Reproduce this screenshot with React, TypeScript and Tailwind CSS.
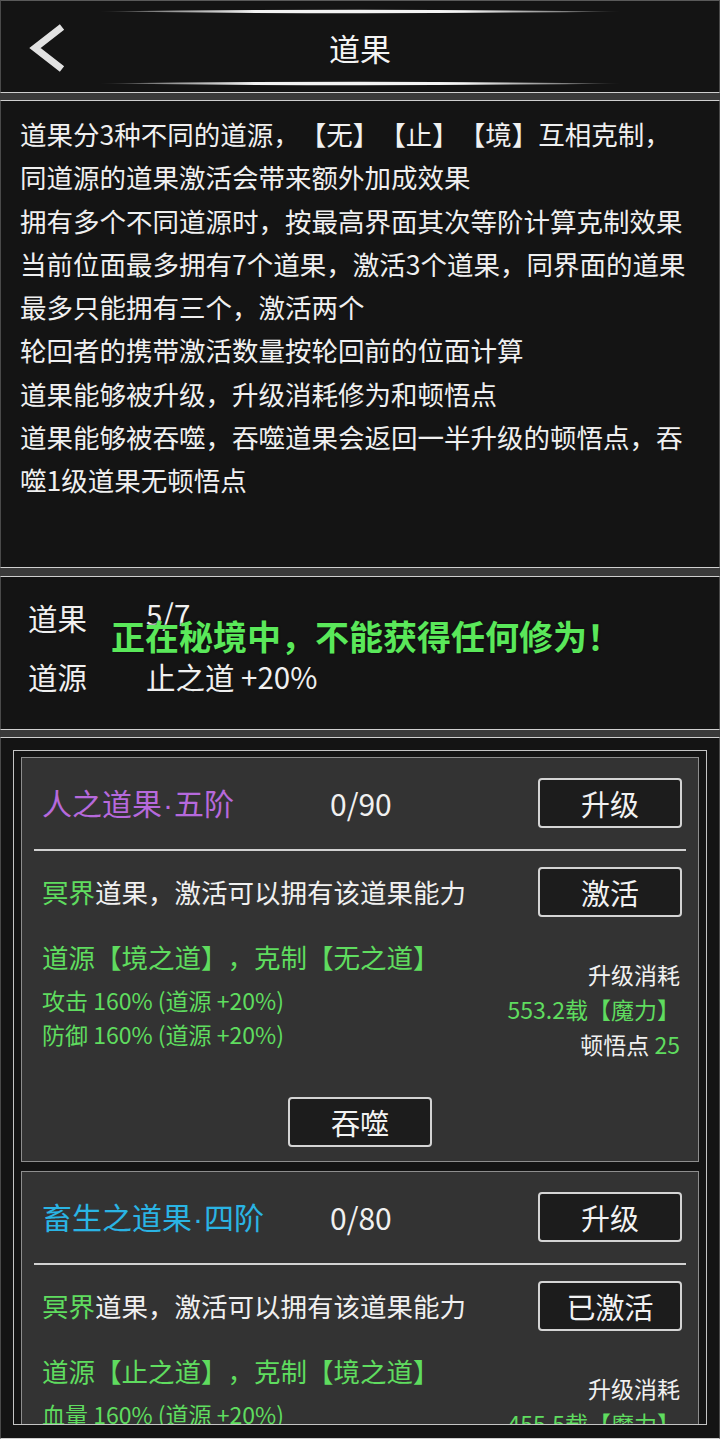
import React from "react";

function Btn({ children, className = "" }: { children: React.ReactNode; className?: string }) {
  return (
    <div
      className={`w-[144px] h-[50px] flex items-center justify-center bg-[#1c1c1c] border-2 border-[#d4d4d4] rounded-[4px] text-[29px] leading-none text-[#f2f2f2] ${className}`}
    >
      {children}
    </div>
  );
}

function GlowLine() {
  return (
    <svg width="520" height="5" viewBox="0 0 520 5" className="block">
      <defs>
        <linearGradient id="gl" x1="0" y1="0" x2="1" y2="0">
          <stop offset="0" stopColor="#2a2a2a" />
          <stop offset="0.12" stopColor="#8a8a8a" />
          <stop offset="0.3" stopColor="#f4f4f4" />
          <stop offset="0.7" stopColor="#f4f4f4" />
          <stop offset="0.88" stopColor="#8a8a8a" />
          <stop offset="1" stopColor="#2a2a2a" />
        </linearGradient>
      </defs>
      <path d="M0,2.5 Q260,-0.8 520,2.5 Q260,5.8 0,2.5 Z" fill="url(#gl)" />
    </svg>
  );
}

type CardProps = {
  name: string;
  grade: string;
  titleColor: string;
  count: string;
  activeLabel: string;
  source: string;
  stats: string[];
  cost: string;
  points: string;
};

function Card({ name, grade, titleColor, count, activeLabel, source, stats, cost, points }: CardProps) {
  return (
    <div className="shrink-0 bg-[#333333] border border-[#8e8e8e]">
      <div className="flex items-center h-[50px] mt-[20px] pl-[20px] pr-[16px]">
        <div className={`w-[288px] text-[30px] leading-none whitespace-nowrap ${titleColor}`}>
          {name}
          <span className="font-['Liberation_Sans',sans-serif] mx-[1px]">·</span>
          {grade}
        </div>
        <div className="text-[30px] leading-none text-[#f0f0f0]">{count}</div>
        <Btn className="ml-auto">升级</Btn>
      </div>
      <div className="mx-[12px] mt-[21px] h-[2px] bg-[#d2d2d2]" />
      <div className="flex items-center h-[50px] mt-[16px] pl-[20px] pr-[16px]">
        <div className="text-[26.5px] leading-none whitespace-nowrap text-[#f0f0f0]">
          <span className="text-[#5fdc5f]">冥界</span>道果，激活可以拥有该道果能力
        </div>
        <Btn className="ml-auto">{activeLabel}</Btn>
      </div>
      <div className="flex justify-between h-[126px] mt-[20px] pl-[20px] pr-[18px]">
        <div className="flex flex-col text-[#5fdc5f]">
          <div className="text-[26.5px] leading-[40px] whitespace-nowrap">{source}</div>
          <div className="mt-[6px] flex flex-col">
            {stats.map((s) => (
              <div key={s} className="text-[23px] leading-[34px] whitespace-nowrap">
                {s}
              </div>
            ))}
          </div>
        </div>
        <div className="pt-[20px] flex flex-col items-end text-[23px] leading-[35px] text-[#f0f0f0] whitespace-nowrap">
          <div>升级消耗</div>
          <div className="text-[#5fdc5f]">{cost}</div>
          <div>
            顿悟点 <span className="text-[#5fdc5f]">{points}</span>
          </div>
        </div>
      </div>
      <div className="flex justify-center mt-[34px] pb-[14px]">
        <Btn>吞噬</Btn>
      </div>
    </div>
  );
}

const introLines = [
  "道果分3种不同的道源，【无】【止】【境】互相克制，",
  "同道源的道果激活会带来额外加成效果",
  "拥有多个不同道源时，按最高界面其次等阶计算克制效果",
  "当前位面最多拥有7个道果，激活3个道果，同界面的道果",
  "最多只能拥有三个，激活两个",
  "轮回者的携带激活数量按轮回前的位面计算",
  "道果能够被升级，升级消耗修为和顿悟点",
  "道果能够被吞噬，吞噬道果会返回一半升级的顿悟点，吞",
  "噬1级道果无顿悟点",
];

export default function App() {
  return (
    <div className="relative w-[720px] h-[1439px] overflow-hidden bg-[#3a3a3a] font-['Noto_Sans_CJK_SC','Noto_Sans',sans-serif] [text-spacing-trim:space-all] text-[#f0f0f0] flex flex-col">
      {/* Header */}
      <div className="h-[93px] shrink-0 bg-[#141414] border-t border-t-[#5a5a5a] border-b border-b-[#cfcfcf] border-x border-x-[#4a4a4a] flex flex-col items-center">
        <div className="mt-[8px]">
          <GlowLine />
        </div>
        <div className="w-full h-[67px] grid grid-cols-[1fr_auto_1fr] items-center">
          <div className="pl-[28px] flex items-center">
            <svg width="36" height="48" viewBox="0 0 36 48">
              <polyline
                points="33,3 6,24 33,45"
                fill="none"
                stroke="#e2e2e2"
                strokeWidth="7"
                strokeLinecap="butt"
                strokeLinejoin="miter"
              />
            </svg>
          </div>
          <div className="text-[31px] leading-none text-[#f4f4f4]">道果</div>
          <div />
        </div>
        <GlowLine />
      </div>

      <div className="h-[7px] shrink-0" />

      {/* Intro panel */}
      <div className="h-[468px] shrink-0 bg-[#141414] border-y border-y-[#cfcfcf] border-x border-x-[#4a4a4a] pt-[11px] pl-[19px]">
        {introLines.map((l) => (
          <div key={l} className="text-[26.5px] leading-[43.25px] whitespace-nowrap text-[#f0f0f0]">
            {l}
          </div>
        ))}
      </div>

      <div className="h-[8px] shrink-0" />

      {/* Summary panel */}
      <div className="h-[154px] shrink-0 bg-[#141414] border-y border-y-[#cfcfcf] border-x border-x-[#4a4a4a] pt-[11px] pl-[27px]">
        <div className="flex items-center h-[59px] text-[29.5px] leading-none">
          <div className="w-[118px]">道果</div>
          <div className="-mt-[8px]">5/7</div>
        </div>
        <div className="flex items-center h-[59px] text-[29.5px] leading-none">
          <div className="w-[118px]">道源</div>
          <div>止之道 +20%</div>
        </div>
      </div>

      <div className="h-[7px] shrink-0" />

      {/* List panel */}
      <div className="h-[702px] shrink-0 bg-[#141414] border-y border-y-[#cfcfcf] border-x border-x-[#4a4a4a] pt-[12px] px-[12px]">
        <div className="h-[675px] overflow-hidden border border-[#c4c4c4] pt-[6px] px-[7px] flex flex-col gap-[9px]">
          <Card
            name="人之道果"
            grade="五阶"
            titleColor="text-[#b669dc]"
            count="0/90"
            activeLabel="激活"
            source="道源【境之道】，克制【无之道】"
            stats={["攻击 160% (道源 +20%)", "防御 160% (道源 +20%)"]}
            cost="553.2载【魔力】"
            points="25"
          />
          <Card
            name="畜生之道果"
            grade="四阶"
            titleColor="text-[#2ab4e4]"
            count="0/80"
            activeLabel="已激活"
            source="道源【止之道】，克制【境之道】"
            stats={["血量 160% (道源 +20%)"]}
            cost="455.5载【魔力】"
            points="20"
          />
        </div>
      </div>

      {/* Toast */}
      <div className="absolute left-[111px] top-[615px] text-[34px] leading-[42px] font-bold text-[#5ae85a] whitespace-nowrap [text-shadow:0_0_2px_#0a0a0a]">
        正在秘境中，不能获得任何修为！
      </div>
    </div>
  );
}
